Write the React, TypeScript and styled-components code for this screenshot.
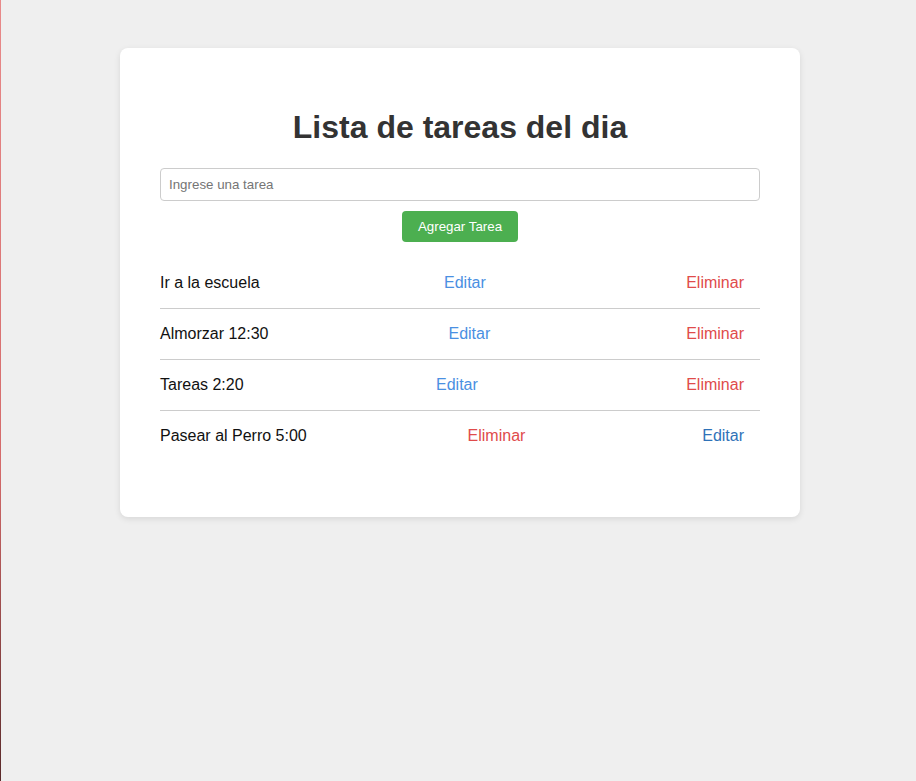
import React from "react";
import styled, { createGlobalStyle } from "styled-components";

const GlobalStyle = createGlobalStyle`
  html {
    background:
      linear-gradient(to bottom, #e88a8a 0%, #d46a6a 60%, #5a2a2a 100%) left top / 1px 100% no-repeat,
      #efefef;
    min-height: 100%;
  }
  body {
    margin: 0;
    padding: 48px 0;
    font-family: "Liberation Sans", Arial, sans-serif;
  }
`;

const Card = styled.div`
  width: 680px;
  box-sizing: border-box;
  margin: 0 auto 0 120px;
  padding: 40px;
  background: #fff;
  border-radius: 8px;
  box-shadow: 0 2px 6px rgba(0, 0, 0, 0.1);
`;

const Title = styled.h1`
  margin: 21px 0 22px;
  font-size: 32px;
  font-weight: bold;
  text-align: center;
  color: #333;
`;

const Input = styled.input`
  display: block;
  width: 100%;
  box-sizing: border-box;
  padding: 8px;
  font-family: "Liberation Sans", Arial, sans-serif;
  font-size: 13.33px;
  border: 1px solid #ccc;
  border-radius: 4px;
  outline: none;
  &::placeholder {
    color: #757575;
  }
`;

const AddButton = styled.button`
  display: block;
  margin: 10px auto 0;
  padding: 8px 16px;
  border: none;
  border-radius: 4px;
  background: #4caf50;
  color: #fff;
  font-family: "Liberation Sans", Arial, sans-serif;
  font-size: 13.33px;
`;

const List = styled.ul`
  list-style: none;
  margin: 16px 0;
  padding: 0;
`;

const Row = styled.li`
  display: flex;
  justify-content: space-between;
  align-items: center;
  padding: 16px 0;
  font-size: 16px;
  line-height: 18px;
  color: #111;
  border-bottom: 1px solid #ccc;
  &:last-child {
    border-bottom: none;
  }
`;

const Action = styled.button<{ $kind: "edit" | "delete"; $dark?: boolean }>`
  padding: 0 16px;
  border: none;
  background: transparent;
  font-family: "Liberation Sans", Arial, sans-serif;
  font-size: 16px;
  line-height: 18px;
  color: ${(p) =>
    p.$kind === "delete" ? "#e04b4b" : p.$dark ? "#2f72b8" : "#4a90e2"};
  cursor: pointer;
`;

type Task = { text: string; order: ("edit" | "delete")[]; dark?: boolean };

const tasks: Task[] = [
  { text: "Ir a la escuela", order: ["edit", "delete"] },
  { text: "Almorzar 12:30", order: ["edit", "delete"] },
  { text: "Tareas 2:20", order: ["edit", "delete"] },
  { text: "Pasear al Perro 5:00", order: ["delete", "edit"], dark: true },
];

export default function App() {
  return (
    <>
      <GlobalStyle />
      <Card>
        <Title>Lista de tareas del dia</Title>
        <Input placeholder="Ingrese una tarea" />
        <AddButton>Agregar Tarea</AddButton>
        <List>
          {tasks.map((t) => (
            <Row key={t.text}>
              <span>{t.text}</span>
              {t.order.map((k) => (
                <Action key={k} $kind={k} $dark={t.dark}>
                  {k === "edit" ? "Editar" : "Eliminar"}
                </Action>
              ))}
            </Row>
          ))}
        </List>
      </Card>
    </>
  );
}
